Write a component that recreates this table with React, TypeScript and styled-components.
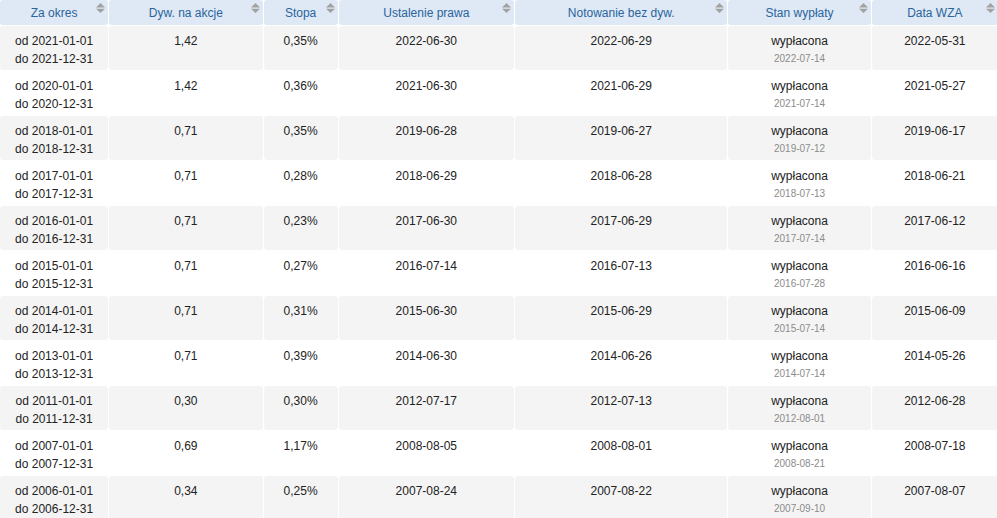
import React from "react";
import styled, { createGlobalStyle } from "styled-components";

const GlobalStyle = createGlobalStyle`
  html, body { margin: 0; padding: 0; background: #fff; }
  body { font-family: Arial, "Liberation Sans", sans-serif; font-size: 12px; color: #222; overflow: hidden; }
`;

const Wrap = styled.div`
  margin: -1px 0 0 -1px;
`;

const Table = styled.table`
  border-collapse: separate;
  border-spacing: 1px;
  table-layout: fixed;
  width: 1000px;
`;

const Th = styled.th<{ $w: number }>`
  width: ${(p) => p.$w}px;
  height: 25px;
  padding: 0;
  background: #dee9f5;
  color: #2a649c;
  font-weight: normal;
  font-size: 12px;
  border-radius: 3px;
  vertical-align: top;
`;

const HeadInner = styled.div`
  display: grid;
  grid-template-columns: 14px 1fr 14px;
  height: 25px;
`;

const HeadLabel = styled.span`
  grid-column: 2;
  align-self: center;
  text-align: center;
  line-height: 18px;
  white-space: nowrap;
`;

const SortSlot = styled.span`
  grid-column: 3;
  display: flex;
  justify-content: flex-end;
  padding: 3px 3px 0 0;
`;

const Row = styled.tr<{ $alt: boolean }>`
  & > td {
    background: ${(p) => (p.$alt ? "#f4f4f4" : "#fff")};
  }
`;

const Td = styled.td`
  height: 44px;
  padding: 6px 0 0;
  box-sizing: border-box;
  vertical-align: top;
  text-align: center;
  line-height: 18px;
  font-size: 12px;
  color: #222;
  border-radius: 3px;
`;

const Line = styled.div``;

const SubDate = styled.div`
  font-size: 10px;
  line-height: 18px;
  color: #8c8c8c;
`;

const SortIcon = () => (
  <svg width="9" height="10" viewBox="0 0 9 10" aria-hidden>
    <path d="M4.5 0 L9 4.5 L0 4.5 Z" fill="#a2a2a2" />
    <path d="M0 5.8 L9 5.8 L4.5 10 Z" fill="#a2a2a2" />
  </svg>
);

const columns: { label: string; w: number }[] = [
  { label: "Za okres", w: 108 },
  { label: "Dyw. na akcje", w: 153 },
  { label: "Stopa", w: 74 },
  { label: "Ustalenie prawa", w: 175 },
  { label: "Notowanie bez dyw.", w: 212 },
  { label: "Stan wypłaty", w: 142 },
  { label: "Data WZA", w: 126 },
];

type R = {
  year: string;
  dyw: string;
  stopa: string;
  prawo: string;
  notowanie: string;
  wyplata: string;
  wza: string;
};

const rows: R[] = [
  { year: "2021", dyw: "1,42", stopa: "0,35%", prawo: "2022-06-30", notowanie: "2022-06-29", wyplata: "2022-07-14", wza: "2022-05-31" },
  { year: "2020", dyw: "1,42", stopa: "0,36%", prawo: "2021-06-30", notowanie: "2021-06-29", wyplata: "2021-07-14", wza: "2021-05-27" },
  { year: "2018", dyw: "0,71", stopa: "0,35%", prawo: "2019-06-28", notowanie: "2019-06-27", wyplata: "2019-07-12", wza: "2019-06-17" },
  { year: "2017", dyw: "0,71", stopa: "0,28%", prawo: "2018-06-29", notowanie: "2018-06-28", wyplata: "2018-07-13", wza: "2018-06-21" },
  { year: "2016", dyw: "0,71", stopa: "0,23%", prawo: "2017-06-30", notowanie: "2017-06-29", wyplata: "2017-07-14", wza: "2017-06-12" },
  { year: "2015", dyw: "0,71", stopa: "0,27%", prawo: "2016-07-14", notowanie: "2016-07-13", wyplata: "2016-07-28", wza: "2016-06-16" },
  { year: "2014", dyw: "0,71", stopa: "0,31%", prawo: "2015-06-30", notowanie: "2015-06-29", wyplata: "2015-07-14", wza: "2015-06-09" },
  { year: "2013", dyw: "0,71", stopa: "0,39%", prawo: "2014-06-30", notowanie: "2014-06-26", wyplata: "2014-07-14", wza: "2014-05-26" },
  { year: "2011", dyw: "0,30", stopa: "0,30%", prawo: "2012-07-17", notowanie: "2012-07-13", wyplata: "2012-08-01", wza: "2012-06-28" },
  { year: "2007", dyw: "0,69", stopa: "1,17%", prawo: "2008-08-05", notowanie: "2008-08-01", wyplata: "2008-08-21", wza: "2008-07-18" },
  { year: "2006", dyw: "0,34", stopa: "0,25%", prawo: "2007-08-24", notowanie: "2007-08-22", wyplata: "2007-09-10", wza: "2007-08-07" },
];

export default function App() {
  return (
    <>
      <GlobalStyle />
      <Wrap>
        <Table>
          <thead>
            <tr>
              {columns.map((c) => (
                <Th key={c.label} $w={c.w}>
                  <HeadInner>
                    <HeadLabel>{c.label}</HeadLabel>
                    <SortSlot>
                      <SortIcon />
                    </SortSlot>
                  </HeadInner>
                </Th>
              ))}
            </tr>
          </thead>
          <tbody>
            {rows.map((r, i) => (
              <Row key={r.year} $alt={i % 2 === 0}>
                <Td>
                  <Line>od {r.year}-01-01</Line>
                  <Line>do {r.year}-12-31</Line>
                </Td>
                <Td>{r.dyw}</Td>
                <Td>{r.stopa}</Td>
                <Td>{r.prawo}</Td>
                <Td>{r.notowanie}</Td>
                <Td>
                  <Line>wypłacona</Line>
                  <SubDate>{r.wyplata}</SubDate>
                </Td>
                <Td>{r.wza}</Td>
              </Row>
            ))}
          </tbody>
        </Table>
      </Wrap>
    </>
  );
}
